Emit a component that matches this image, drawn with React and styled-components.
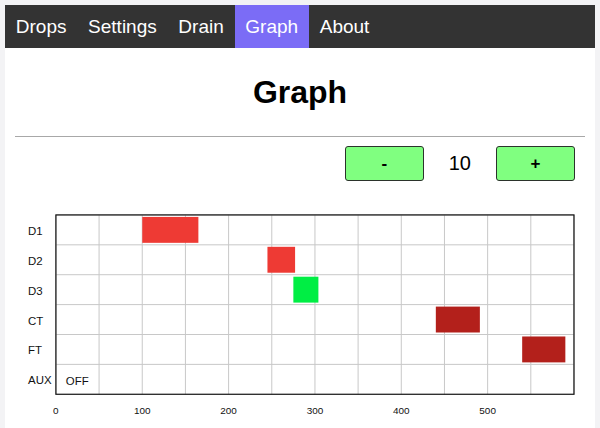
import React from 'react'
import styled, { createGlobalStyle } from 'styled-components'

const GlobalStyle = createGlobalStyle`
body{
    margin:0;
    background:#f3f3f5;
    font-family:"Liberation Sans", Arial, sans-serif;
}
`

const tabs = ['Drops', 'Settings', 'Drain', 'Graph', 'About']

const rows = ['D1', 'D2', 'D3', 'CT', 'FT', 'AUX']

const bars = [
    { row: 0, from: 100, to: 165, color: '#ee3a34' },
    { row: 1, from: 245, to: 277, color: '#ee3a34' },
    { row: 2, from: 275, to: 304, color: '#00ee44' },
    { row: 3, from: 440, to: 491, color: '#b3201b' },
    { row: 4, from: 540, to: 590, color: '#b3201b' },
]

// plot geometry, in svg units
const PX = 50
const PY = 18
const PW = 520
const RH = 30
const scale = PW / 600

function Chart() {
    const ph = RH * rows.length
    const ticks = []
    for (let v = 0; v <= 600; v += 50) ticks.push(v)
    return (
        <ChartSvg width="590" height="232" viewBox="0 0 590 232">
            {ticks.map(v => (
                <line key={'v' + v} x1={PX + v * scale} x2={PX + v * scale} y1={PY} y2={PY + ph} stroke="#c8c8c8" strokeWidth="1" />
            ))}
            {rows.map((r, i) => (
                <line key={'h' + i} x1={PX} x2={PX + PW} y1={PY + i * RH} y2={PY + i * RH} stroke="#c8c8c8" strokeWidth="1" />
            ))}
            {bars.map((b, i) => (
                <rect key={i} x={PX + b.from * scale} y={PY + b.row * RH + 2} width={(b.to - b.from) * scale} height={RH - 4} fill={b.color} />
            ))}
            <rect x={PX} y={PY} width={PW} height={ph} fill="none" stroke="#111" strokeWidth="1.2" />
            {rows.map((r, i) => (
                <text key={r} x="22" y={PY + i * RH + 20} fontSize="11.5" fill="#111">{r}</text>
            ))}
            <text x="60" y={PY + 5 * RH + 21} fontSize="11.5" fill="#111">OFF</text>
            {ticks.filter(v => v % 100 === 0 && v < 600).map(v => (
                <text key={'t' + v} x={PX + v * scale} y="218" fontSize="10" textAnchor="middle" fill="#111">{v}</text>
            ))}
        </ChartSvg>
    )
}

function App() {
    return (
        <Page>
            <GlobalStyle />
            <Panel>
                <Nav>
                    {tabs.map(t => (
                        <Tab key={t} active={t === 'Graph'}>{t}</Tab>
                    ))}
                </Nav>
                <Title>Graph</Title>
                <Divider />
                <Controls>
                    <StepButton>-</StepButton>
                    <Count>10</Count>
                    <StepButton>+</StepButton>
                </Controls>
                <Chart />
            </Panel>
        </Page>
    )
}

const Page = styled.div`
padding:5px 5px 0 5px;
height:423px;
overflow:hidden;
`
const Panel = styled.div`
background:#fff;
height:100%;
display:flex;
flex-direction:column;
`
const Nav = styled.div`
display:flex;
height:43px;
background:#333;
`
const Tab = styled.a`
padding:0 10.8px;
line-height:43px;
font-size:19px;
color:#fff;
background:${p => (p.active ? '#7b6cf6' : 'transparent')};
cursor:pointer;
`
const Title = styled.h1`
margin:24px 0 0 0;
height:40px;
line-height:40px;
font-size:32px;
font-weight:bold;
text-align:center;
color:#000;
`
const Divider = styled.div`
height:1px;
background:#a8a8a8;
margin:24px 10px 0 10px;
`
const Controls = styled.div`
display:flex;
justify-content:flex-end;
align-items:center;
margin-top:9px;
padding-right:20px;
height:36px;
`
const StepButton = styled.button`
width:79px;
height:35px;
background:#80ff80;
border:1.5px solid #2b332b;
border-radius:3px;
font-family:"Liberation Sans", Arial, sans-serif;
font-size:17px;
font-weight:bold;
color:#000;
cursor:pointer;
`
const Count = styled.span`
margin:0 25px;
font-size:20px;
color:#000;
`
const ChartSvg = styled.svg`
display:block;
margin-top:15px;
font-family:"Liberation Sans", Arial, sans-serif;
`

export default App
